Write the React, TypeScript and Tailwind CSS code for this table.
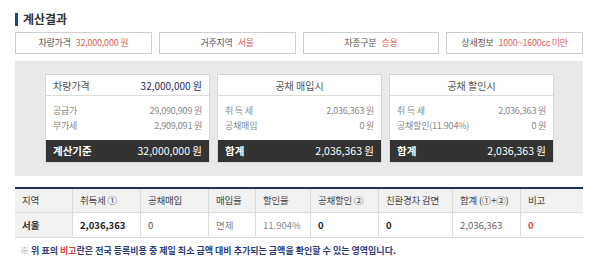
import React from 'react';

const font = { fontFamily: '"Noto Sans CJK KR", "Noto Sans", sans-serif' };

type Row = { label: string; value: string };

type CardProps = {
  title: string;
  headerValue?: string;
  rows: Row[];
  footLabel: string;
  footValue: string;
};

function Card({ title, headerValue, rows, footLabel, footValue }: CardProps) {
  return (
    <div className="flex w-[165px] flex-col border border-[#d6d6d6] bg-white">
      {headerValue ? (
        <div className="flex h-[21px] items-center justify-between border-b border-[#dcdcdc] px-[7px] text-[10px]">
          <span className="text-[#555]">{title}</span>
          <span className="text-[#1c2d5a]">{headerValue}</span>
        </div>
      ) : (
        <div className="flex h-[21px] items-center justify-center border-b border-[#dcdcdc] text-[10px] text-[#555]">
          {title}
        </div>
      )}
      <div className="flex h-[44px] flex-col justify-center gap-[1px] px-[7px] text-[9px] tracking-tight text-[#888]">
        {rows.map((r) => (
          <div key={r.label} className="flex h-[14px] items-center justify-between">
            <span>{r.label}</span>
            <span>{r.value}</span>
          </div>
        ))}
      </div>
      <div className="flex h-[22px] items-center justify-between bg-[#333] px-[7px] text-[10.5px] text-white">
        <span className="font-bold">{footLabel}</span>
        <span>{footValue}</span>
      </div>
    </div>
  );
}

function InfoBox({ label, value }: { label: string; value: string }) {
  return (
    <div className="flex h-[22px] flex-1 items-center justify-center gap-[5px] border border-[#cfcfcf] text-[9px] tracking-tight">
      <span className="text-[#555]">{label}</span>
      <span className="text-[#e0605c]">{value}</span>
    </div>
  );
}

const cols = ['w-[57px]', 'w-[68px]', 'w-[68px]', 'w-[47px]', 'w-[55px]', 'w-[68px]', 'w-[74px]', 'w-[68px]', 'w-[63px]'];

export default function App() {
  const heads = ['지역', '취득세 ①', '공채매입', '매입율', '할인율', '공채할인 ②', '친환경차 감면', '합계 (①+②)', '비고'];
  const cells: { text: string; cls: string }[] = [
    { text: '서울', cls: 'bg-[#f1f1f1] text-[#333] font-bold' },
    { text: '2,036,363', cls: 'text-[#222] font-bold' },
    { text: '0', cls: 'text-[#555]' },
    { text: '면제', cls: 'text-[#888]' },
    { text: '11.904%', cls: 'text-[#888]' },
    { text: '0', cls: 'text-[#222] font-bold' },
    { text: '0', cls: 'text-[#222] font-bold' },
    { text: '2,036,363', cls: 'text-[#666]' },
    { text: '0', cls: 'text-[#e0403c] font-bold' },
  ];

  return (
    <div className="h-[270px] w-[600px] bg-white" style={font}>
      <div className="ml-[15px] w-[568px] pt-[12px]">
        <div className="flex h-[14px] items-center gap-[5px]">
          <span className="h-[13px] w-[3px] bg-[#1e4a8c]" />
          <span className="text-[12px] font-bold leading-none text-[#333]">계산결과</span>
        </div>

        <div className="mt-[6px] flex gap-[7px]">
          <InfoBox label="차량가격" value="32,000,000 원" />
          <InfoBox label="거주지역" value="서울" />
          <InfoBox label="차종구분" value="승용" />
          <InfoBox label="상세정보" value="1000~1600cc 미만" />
        </div>

        <div className="mt-[7px] flex h-[115px] items-center gap-[7px] bg-[#e9e9e9] pl-[30px] pr-[29px]">
          <Card
            title="차량가격"
            headerValue="32,000,000 원"
            rows={[
              { label: '공급가', value: '29,090,909 원' },
              { label: '부가세', value: '2,909,091 원' },
            ]}
            footLabel="계산기준"
            footValue="32,000,000 원"
          />
          <Card
            title="공채 매입시"
            rows={[
              { label: '취 득 세', value: '2,036,363 원' },
              { label: '공채매입', value: '0 원' },
            ]}
            footLabel="합계"
            footValue="2,036,363 원"
          />
          <Card
            title="공채 할인시"
            rows={[
              { label: '취 득 세', value: '2,036,363 원' },
              { label: '공채할인(11.904%)', value: '0 원' },
            ]}
            footLabel="합계"
            footValue="2,036,363 원"
          />
        </div>

        <div className="mt-[11px] border-t-2 border-[#1f3057]">
          <div className="flex h-[24px] border-b border-[#dcdcdc] bg-[#f1f1f1] text-[9.5px] tracking-tight text-[#444]">
            {heads.map((h, i) => (
              <div
                key={h}
                className={`${cols[i]} flex items-center pl-[7px] ${i > 0 ? 'border-l border-[#dcdcdc]' : ''}`}
              >
                {h}
              </div>
            ))}
          </div>
          <div className="flex h-[25px] border-b border-[#dcdcdc] text-[9.5px]">
            {cells.map((c, i) => (
              <div
                key={i}
                className={`${cols[i]} flex items-center pl-[7px] ${c.cls} ${i > 0 ? 'border-l border-[#dcdcdc]' : ''}`}
              >
                {c.text}
              </div>
            ))}
          </div>
        </div>

        <p className="mt-[6px] pl-[5px] text-[9px] font-bold text-[#2c3e7a]">
          <span className="font-normal text-[#999]">※</span> 위 표의{' '}
          <span className="text-[#e0403c]">비고</span>란은 전국 등록비용 중 제일 최소 금액 대비 추가되는 금액을 확인할 수 있는 영역입니다.
        </p>
      </div>
    </div>
  );
}
